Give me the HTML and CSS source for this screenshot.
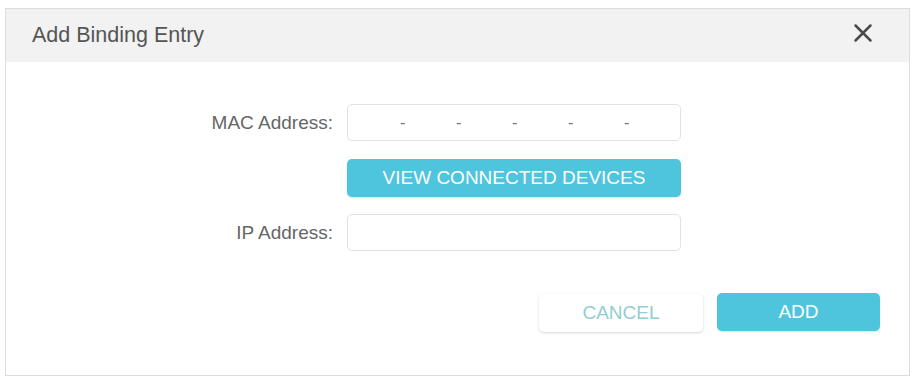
FILE: index.html
```html
<!DOCTYPE html>
<html>
<head>
<meta charset="utf-8">
<link rel="stylesheet" href="styles.css">
</head>
<body>
<div class="dialog">
  <div class="header">
    <span class="title">Add Binding Entry</span>
    <svg class="close" width="20" height="20" viewBox="0 0 20 20"><path d="M2.5 2.5L17.5 17.5M17.5 2.5L2.5 17.5" stroke="#4a4a4a" stroke-width="2.5" stroke-linecap="round"/></svg>
  </div>
  <div class="form">
    <label class="label">MAC Address:</label>
    <div class="input mac">
      <span class="seg"></span><span class="dash">-</span>
      <span class="seg"></span><span class="dash">-</span>
      <span class="seg"></span><span class="dash">-</span>
      <span class="seg"></span><span class="dash">-</span>
      <span class="seg"></span><span class="dash">-</span>
      <span class="seg"></span>
    </div>
    <span></span>
    <div class="btn primary view">VIEW CONNECTED DEVICES</div>
    <label class="label">IP Address:</label>
    <div class="input"></div>
  </div>
  <div class="footer">
    <div class="btn cancel">CANCEL</div>
    <div class="btn primary add">ADD</div>
  </div>
</div>
</body>
</html>
```
FILE: styles.css
```css
html, body {
  margin: 0;
  background: #ffffff;
}
body {
  padding: 8px 5px 0 5px;
  font-family: "Liberation Sans", Arial, sans-serif;
}
.dialog {
  width: 903px;
  height: 366px;
  border: 1px solid #dcdcdc;
  background: #fff;
  box-sizing: content-box;
}
.header {
  height: 53px;
  background: #f2f2f2;
  display: flex;
  align-items: center;
  justify-content: space-between;
  padding: 0 36px 0 26px;
}
.title {
  font-size: 21.5px;
  color: #555;
}
.close {
  display: block;
  margin-top: -5px;
}
.form {
  display: grid;
  grid-template-columns: 327px 334px;
  column-gap: 14px;
  row-gap: 17px;
  margin-top: 42px;
  align-items: center;
}
.label {
  text-align: right;
  font-size: 19px;
  color: #666;
}
.input {
  height: 35px;
  border: 1px solid #e2e2e2;
  border-radius: 5px;
  background: #fff;
}
.mac {
  display: flex;
  align-items: center;
}
.seg {
  flex: 1;
}
.dash {
  color: #777;
  font-size: 16px;
  width: 4px;
  text-align: center;
}
.btn {
  display: flex;
  align-items: center;
  justify-content: center;
  border-radius: 5px;
  font-size: 19px;
  box-sizing: border-box;
}
.primary {
  background: #4ec4dd;
  color: #ffffff;
  box-shadow: 0 1px 2px rgba(0, 0, 0, 0.12);
}
.view {
  height: 38px;
  margin-top: 1px;
}
.footer {
  display: flex;
  justify-content: flex-end;
  gap: 14px;
  margin-top: 42px;
  padding-right: 29px;
}
.cancel {
  width: 164px;
  height: 38px;
  margin-top: 1px;
  background: #fff;
  color: #93cdd2;
  box-shadow: 0 1px 3px rgba(0, 0, 0, 0.16);
}
.add {
  width: 163px;
  height: 38px;
}
```
